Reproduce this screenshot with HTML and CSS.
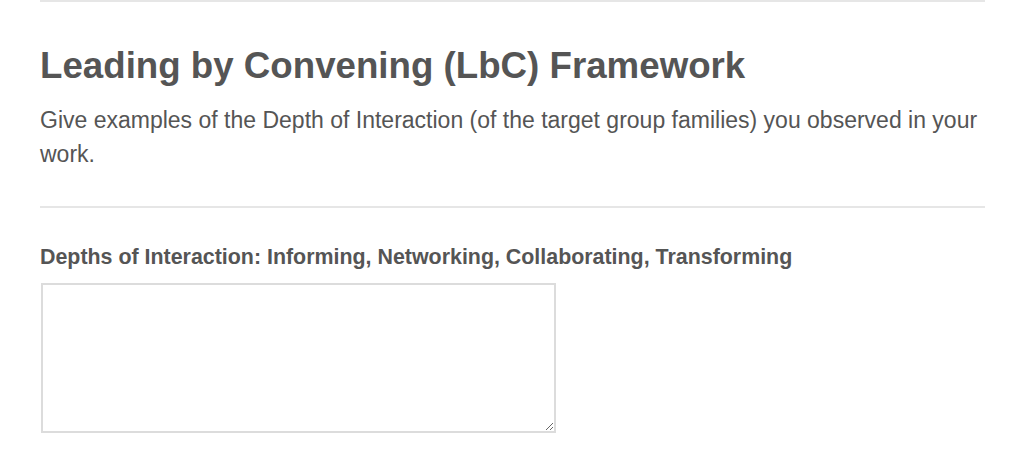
FILE: index.html
```html
<!DOCTYPE html>
<html lang="en">
<head>
    <meta charset="UTF-8">
    <title>LbC Framework</title>
    <link rel="stylesheet" href="styles.css">
</head>
<body>
<div class="container">
    <hr class="divider">
    <div class="section-head">
        <h2>Leading by Convening (LbC) Framework</h2>
        <p>Give examples of the Depth of Interaction (of the target group families) you observed in your work.</p>
    </div>
    <hr class="divider">
    <div class="field">
        <label for="depths">Depths of Interaction: Informing, Networking, Collaborating, Transforming</label>
        <textarea id="depths"></textarea>
    </div>
</div>
</body>
</html>
```

FILE: styles.css
```css
* { box-sizing: border-box; }
body {
    font-family: "Liberation Sans", Arial, Helvetica, sans-serif;
    margin: 0;
    background: #fff;
    color: #555;
}
.container {
    width: 945px;
    margin-left: 40px;
}
.divider {
    border: none;
    border-top: 2px solid #e6e6e6;
    margin: 0;
}
.section-head {
    padding: 42px 0 35px;
}
h2 {
    font-size: 36.7px;
    line-height: 44px;
    margin: 0 0 15px;
    color: #555;
}
.section-head p {
    font-size: 23px;
    line-height: 34px;
    margin: 0;
    color: #555;
}
.field {
    padding-top: 34px;
}
label {
    display: block;
    font-size: 21.4px;
    font-weight: bold;
    line-height: 30px;
    margin-bottom: 11px;
}
textarea {
    display: block;
    width: 515px;
    height: 150px;
    border: 2px solid #dcdcdc;
    background: #fff;
    margin: 0 0 0 1px;
}
```
